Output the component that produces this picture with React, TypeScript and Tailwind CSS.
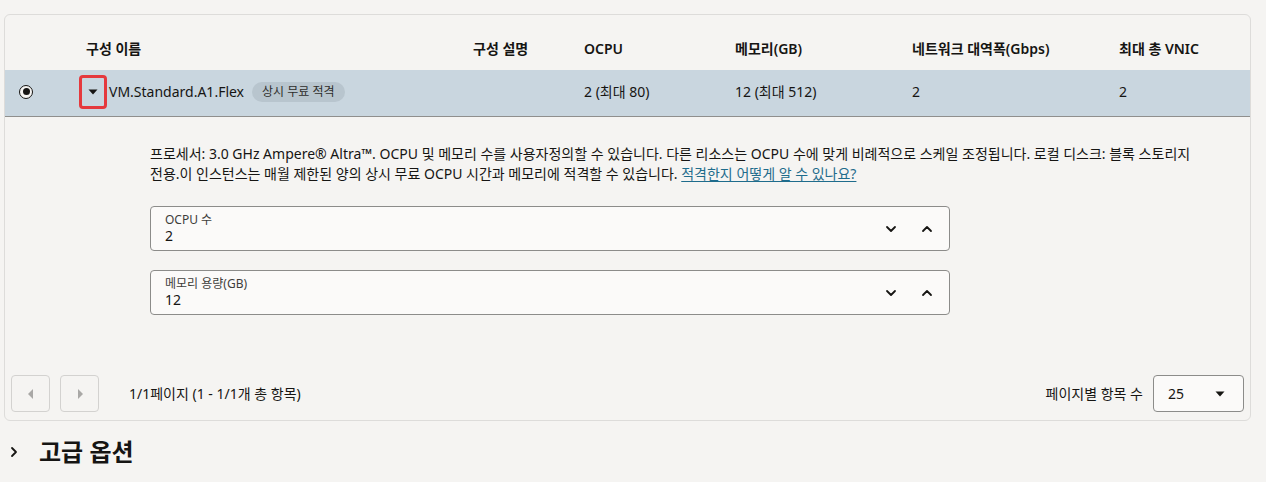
import React from 'react';

const FONT = { fontFamily: '"Noto Sans", "Noto Sans CJK KR", sans-serif' };

const Chevron: React.FC<{ dir: 'up' | 'down' | 'right' }> = ({ dir }) => {
  const d = dir === 'down' ? 'M2 4l4 4 4-4' : dir === 'up' ? 'M2 8l4-4 4 4' : 'M4 2l4 4-4 4';
  return (
    <svg width="12" height="12" viewBox="0 0 12 12" fill="none">
      <path d={d} stroke="#161513" strokeWidth="1.8" strokeLinecap="round" strokeLinejoin="round" />
    </svg>
  );
};

const Spinner: React.FC<{ label: string; value: string }> = ({ label, value }) => (
  <div className="flex h-[45px] w-[800px] items-center rounded-[4px] border border-[#8c8c8a] bg-[#fbfaf9] pl-[14px] pr-[16px]">
    <div className="flex flex-1 flex-col">
      <span className="text-[12px] leading-[15px] text-[#3e3d3b]">{label}</span>
      <span className="text-[14px] leading-[18px] text-[#161513]">{value}</span>
    </div>
    <div className="flex items-center gap-[24px]">
      <Chevron dir="down" />
      <Chevron dir="up" />
    </div>
  </div>
);

const PageBtn: React.FC<{ dir: 'left' | 'right' }> = ({ dir }) => (
  <div className="flex h-[37px] w-[39px] items-center justify-center rounded-[4px] border border-[#d3d2d0] bg-[#f5f4f2]">
    <svg width="6" height="10" viewBox="0 0 6 10">
      <path d={dir === 'left' ? 'M5 0v10L0 5z' : 'M1 0v10l5-5z'} fill="#a9a8a6" />
    </svg>
  </div>
);

const App: React.FC = () => {
  const cols = 'grid grid-cols-[75px_393px_111px_151px_177px_207px_1fr]';
  return (
    <div className="min-h-[482px] w-[1266px] bg-[#f5f4f2] pt-[14px] text-[#161513]" style={FONT}>
      <div className="ml-[4px] w-[1247px] rounded-[6px] border border-[#dddcda] bg-[#f5f4f2]">
        {/* header */}
        <div className={`${cols} h-[55px] items-end pb-[11px] text-[14px] font-semibold`}>
          <div />
          <div className="pl-[6px]">구성 이름</div>
          <div>구성 설명</div>
          <div>OCPU</div>
          <div>메모리(GB)</div>
          <div>네트워크 대역폭(Gbps)</div>
          <div>최대 총 VNIC</div>
        </div>

        {/* selected row */}
        <div className={`${cols} h-[47px] items-center border-b border-[#8f8f8d] bg-[#c9d6df] pb-[3px] text-[14px]`}>
          <div className="pl-[14px]">
            <div className="flex h-[14px] w-[14px] items-center justify-center rounded-full border-[1.5px] border-[#161513] bg-[#f5f4f2]">
              <div className="h-[7px] w-[7px] rounded-full bg-[#161513]" />
            </div>
          </div>
          <div className="flex items-center">
            <div className="-ml-[1px] flex h-[34px] w-[28px] items-center justify-center rounded-[4px] border-[3px] border-[#e5393d]">
              <svg width="10" height="6" viewBox="0 0 10 6">
                <path d="M0.5 0.5h9L5 5.5z" fill="#161513" />
              </svg>
            </div>
            <span className="ml-[2px]">VM.Standard.A1.Flex</span>
            <span className="ml-[8px] flex h-[20px] items-center rounded-full bg-[#b8c5ce] px-[10px] text-[12px] text-[#2f2e2c]">
              상시 무료 적격
            </span>
          </div>
          <div />
          <div>2 (최대 80)</div>
          <div>12 (최대 512)</div>
          <div>2</div>
          <div>2</div>
        </div>

        {/* expanded detail */}
        <div className="pl-[145px] pt-[27px]">
          <p className="whitespace-nowrap text-[14px] leading-[20px] text-[#161513]">
            프로세서: 3.0 GHz Ampere® Altra™. OCPU 및 메모리 수를 사용자정의할 수 있습니다. 다른 리소스는 OCPU 수에 맞게 비례적으로 스케일 조정됩니다. 로컬 디스크: 블록 스토리지
            <br />
            전용.이 인스턴스는 매월 제한된 양의 상시 무료 OCPU 시간과 메모리에 적격할 수 있습니다.{' '}
            <a className="text-[#1f6c8c] underline underline-offset-2">적격한지 어떻게 알 수 있나요?</a>
          </p>
          <div className="mt-[22px] flex flex-col gap-[19px]">
            <Spinner label="OCPU 수" value="2" />
            <Spinner label="메모리 용량(GB)" value="12" />
          </div>
        </div>

        {/* pagination */}
        <div className="mt-[60px] flex items-center pb-[8px] pl-[6px] pr-[6px]">
          <div className="flex gap-[10px]">
            <PageBtn dir="left" />
            <PageBtn dir="right" />
          </div>
          <span className="ml-[30px] text-[14px]">1/1페이지 (1 - 1/1개 총 항목)</span>
          <div className="ml-auto flex items-center">
            <span className="text-[14px]">페이지별 항목 수</span>
            <div className="ml-[10px] flex h-[37px] w-[91px] items-center justify-between rounded-[4px] border border-[#8c8c8a] bg-[#fbfaf9] pl-[14px] pr-[18px] text-[14px]">
              <span>25</span>
              <svg width="10" height="6" viewBox="0 0 10 6">
                <path d="M0.5 0.5h9L5 5.5z" fill="#161513" />
              </svg>
            </div>
          </div>
        </div>
      </div>

      {/* advanced options */}
      <div className="mt-[15px] flex items-center pl-[8px]">
        <Chevron dir="right" />
        <span className="ml-[19px] text-[24px] font-bold leading-[32px]">고급 옵션</span>
      </div>
    </div>
  );
};

export default App;
